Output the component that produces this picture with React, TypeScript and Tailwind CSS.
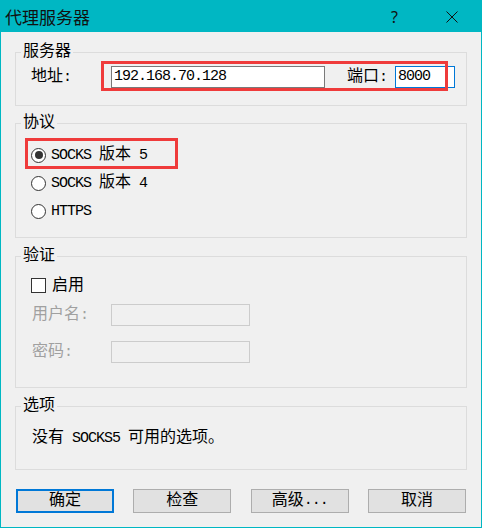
import React from 'react';

const CJK = /[\u3000-\u9fff\uff00-\uffef]/;

// SimSun-style text: CJK glyphs at 16px, latin glyphs on an 8px half-width grid
const Txt: React.FC<{ s: string }> = ({ s }) => (
  <>
    {s
      .split(/([\u3000-\u9fff\uff00-\uffef]+)/)
      .filter(Boolean)
      .map((p, i) =>
        CJK.test(p) ? (
          <span key={i} className="text-[16px]">{p}</span>
        ) : (
          <span key={i} className="text-[15px] tracking-[-1px] whitespace-pre">{p}</span>
        )
      )}
  </>
);

const Group: React.FC<{ title: string; className: string; children: React.ReactNode }> = ({ title, className, children }) => (
  <fieldset className={`mx-[14px] border border-[#dcdcdc] px-0 pb-0 ${className}`}>
    <legend className="ml-[5px] px-[2px] leading-[19px]">
      <Txt s={title} />
    </legend>
    {children}
  </fieldset>
);

const Radio: React.FC<{ label: string; checked?: boolean }> = ({ label, checked }) => (
  <div className="flex h-[28px] items-center pl-[15px]">
    <div className="flex h-[15px] w-[15px] items-center justify-center rounded-full border border-[#333333] bg-white">
      {checked && <div className="h-[8px] w-[8px] rounded-full bg-[#333333]" />}
    </div>
    <div className="ml-[5px] leading-[20px]">
      <Txt s={label} />
    </div>
  </div>
);

const Button: React.FC<{ label: string; focused?: boolean }> = ({ label, focused }) => (
  <button
    className={
      focused
        ? 'flex h-[24px] w-[98px] items-center justify-center border-2 border-[#0078d7] bg-[#e1e1e1] leading-[20px]'
        : 'flex h-[24px] w-[98px] items-center justify-center border border-[#adadad] bg-[#e1e1e1] leading-[20px]'
    }
  >
    <Txt s={label} />
  </button>
);

export default function App() {
  return (
    <div
      className="relative flex h-[528px] w-[482px] flex-col border border-[#00b7c3] bg-[#f0f0f0] text-black"
      style={{ fontFamily: '"Liberation Mono", "Noto Sans CJK SC", monospace' }}
    >
      {/* title bar */}
      <div className="flex h-[31px] shrink-0 items-center bg-[#00b7c3] pl-[4px]">
        <span className="text-[17px] leading-[20px] text-[#111111]" style={{ fontFamily: '"Noto Sans CJK SC", sans-serif' }}>
          代理服务器
        </span>
        <span className="ml-auto text-[16px] leading-[20px] text-[#111111]" style={{ fontFamily: '"Noto Sans", sans-serif' }}>
          ?
        </span>
        <svg width="12" height="12" viewBox="0 0 12 12" className="ml-[48px] mr-[23px]">
          <path d="M0.5 0.5 L11.5 11.5 M11.5 0.5 L0.5 11.5" stroke="#111111" strokeWidth="1" />
        </svg>
      </div>

      <Group title="服务器" className="mt-[11px] h-[63px]">
        <div className="mt-[4px] flex h-[22px] items-center pl-[15px]">
          <div className="w-[80px] leading-[20px]">
            <Txt s="地址:" />
          </div>
          <input
            readOnly
            value="192.168.70.128"
            className="h-[22px] w-[214px] border border-[#7a7a7a] bg-white pl-[2px] text-[15px] tracking-[-1px] outline-none"
          />
          <div className="ml-[22px] w-[48px] leading-[20px]">
            <Txt s="端口:" />
          </div>
          <input
            readOnly
            value="8000"
            className="h-[22px] w-[60px] border border-[#0078d7] bg-white pl-[2px] text-[15px] tracking-[-1px] outline-none"
          />
        </div>
      </Group>

      <Group title="协议" className="mt-[8px] h-[124px]">
        <div className="mt-[8px]">
          <Radio label="SOCKS 版本 5" checked />
          <Radio label="SOCKS 版本 4" />
          <Radio label="HTTPS" />
        </div>
      </Group>

      <Group title="验证" className="mt-[9px] h-[141px]">
        <div className="mt-[12px] flex h-[15px] items-center pl-[15px]">
          <div className="h-[15px] w-[15px] border border-[#333333] bg-white" />
          <div className="ml-[6px] leading-[20px]">
            <Txt s="启用" />
          </div>
        </div>
        <div className="mt-[11px] flex h-[22px] items-center pl-[16px] text-[#a0a0a0]">
          <div className="w-[79px] leading-[20px]">
            <Txt s="用户名:" />
          </div>
          <div className="h-[22px] w-[139px] border border-[#cccccc] bg-[#f0f0f0]" />
        </div>
        <div className="mt-[15px] flex h-[22px] items-center pl-[16px] text-[#a0a0a0]">
          <div className="w-[79px] leading-[20px]">
            <Txt s="密码:" />
          </div>
          <div className="h-[22px] w-[139px] border border-[#cccccc] bg-[#f0f0f0]" />
        </div>
      </Group>

      <Group title="选项" className="mt-[9px] h-[73px]">
        <div className="mt-[12px] pl-[16px] leading-[20px]">
          <Txt s="没有 SOCKS5 可用的选项。" />
        </div>
      </Group>

      <div className="mt-[19px] flex justify-between px-[15px]">
        <Button label="确定" focused />
        <Button label="检查" />
        <Button label="高级..." />
        <Button label="取消" />
      </div>

      {/* red annotation boxes */}
      <div className="pointer-events-none absolute left-[100px] top-[60px] h-[30px] w-[347px] border-[3px] border-[#ef3b3b]" />
      <div className="pointer-events-none absolute left-[24px] top-[137px] h-[31px] w-[153px] border-[3px] border-[#ef3b3b]" />
    </div>
  );
}
